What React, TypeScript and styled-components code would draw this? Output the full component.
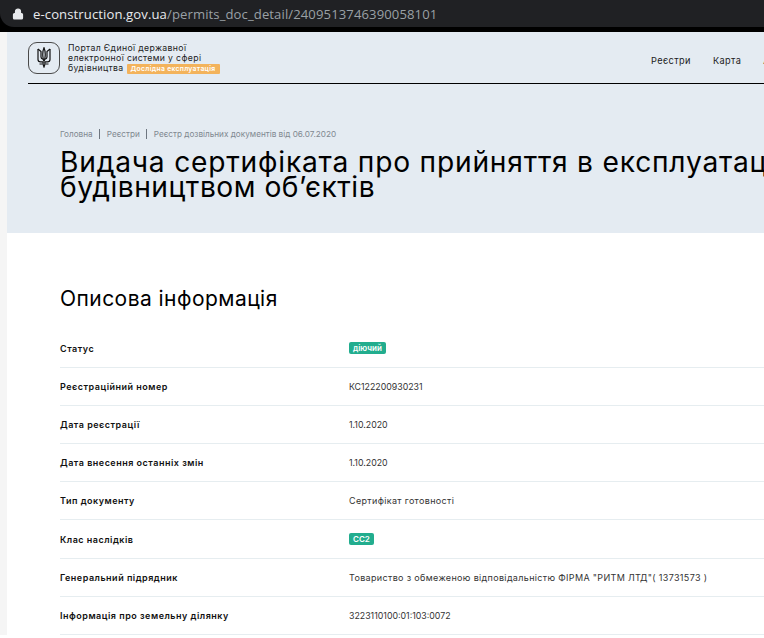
import { createGlobalStyle } from 'styled-components'
import styled from 'styled-components'
import { Lock } from 'lucide-react'

const GlobalStyle = createGlobalStyle`
  html, body {
    margin: 0;
    padding: 0;
    background: #fff;
    overflow: hidden;
  }
  body {
    font-family: 'Inter', 'Liberation Sans', sans-serif;
    color: #000;
  }
`

const Screen = styled.div`
  width: 764px;
  height: 638px;
  overflow: hidden;
`

const ChromeBar = styled.div`
  height: 32px;
  background: #000;
`

const AddressPill = styled.div`
  height: 27px;
  background: #202124;
  border-radius: 0 0 0 14px;
  display: flex;
  align-items: center;
  padding-left: 12px;
  gap: 9px;
`

const Url = styled.div`
  font-family: 'Open Sans', sans-serif;
  font-size: 13.1px;
  letter-spacing: 0.1px;
  color: #9aa0a6;
  white-space: nowrap;
  b {
    font-weight: 400;
    color: #e8eaed;
  }
`

const Page = styled.div`
  padding-left: 7px;
  background: linear-gradient(to right, #f5f5f5 7px, #fff 7px);
  width: 1100px;
`

const Hero = styled.section`
  background: #e4ebf2;
  height: 201px;
  padding: 0 21px;
  display: flex;
  flex-direction: column;
`

const Header = styled.header`
  height: 51px;
  border-bottom: 1px solid #000;
  display: flex;
  align-items: center;
  gap: 8px;
`

const LogoBox = styled.div`
  width: 30px;
  height: 30px;
  border: 1px solid #4a4a4a;
  border-radius: 9px;
  display: flex;
  align-items: center;
  justify-content: center;
  flex: none;
`

const PortalName = styled.div`
  margin-top: 2px;
  font-size: 8.7px;
  line-height: 10.2px;
  letter-spacing: 0.36px;
  color: #222;
  width: 170px;
  white-space: nowrap;
`

const TrialBadge = styled.span`
  display: inline-block;
  margin-left: 3px;
  padding: 0 4px;
  height: 10px;
  line-height: 10px;
  font-size: 6.8px;
  letter-spacing: 0.3px;
  font-weight: 600;
  color: #fff;
  background: #f3b35c;
  border-radius: 1px;
`

const Nav = styled.nav`
  margin: 6px 0 0 405px;
  display: flex;
  gap: 22px;
  font-size: 9.2px;
  letter-spacing: 0.4px;
  color: #1b1b1b;
  white-space: nowrap;
`

const Crumbs = styled.div`
  margin: 45px 0 0 32px;
  display: flex;
  align-items: center;
  gap: 5.5px;
  font-size: 8.2px;
  color: #808890;
  height: 10px;
`

const CrumbSep = styled.span`
  width: 1px;
  height: 10px;
  background: #6e7680;
  margin: 0 1px;
`

const Title = styled.h1`
  margin: 11px 0 0 32px;
  font-size: 28.2px;
  line-height: 25px;
  font-weight: 400;
  color: #000;
  letter-spacing: 0.5px;
  white-space: nowrap;
  &::first-line {
    letter-spacing: 0.78px;
  }
`

const Content = styled.main`
  padding: 54px 0 0 53px;
`

const SectionTitle = styled.h2`
  margin: 0 0 18.5px;
  font-size: 21px;
  line-height: 24px;
  font-weight: 400;
  letter-spacing: 0.45px;
  color: #000;
`

const Rows = styled.div`
  width: 900px;
`

const Row = styled.div`
  display: grid;
  grid-template-columns: 289px 1fr;
  align-items: center;
  height: 37.2px;
  border-bottom: 1px solid #e6edf0;
  font-size: 9px;
  box-sizing: content-box;
`

const Label = styled.div`
  font-weight: 600;
  letter-spacing: 0.5px;
  color: #111;
`

const Value = styled.div<{ $numeric?: boolean }>`
  font-size: ${(p) => (p.$numeric ? '8.8px' : '9px')};
  letter-spacing: ${(p) => (p.$numeric ? '0' : '0.34px')};
  color: #333;
`

const Pill = styled.span`
  display: inline-block;
  padding: 0 4px;
  height: 12px;
  line-height: 12px;
  font-size: 8px;
  font-weight: 600;
  letter-spacing: 0;
  color: #fff;
  background: #22ad8e;
  border-radius: 2px;
`

// малий тризуб для логотипа
const Trident = () => (
  <svg width="14" height="21" viewBox="0 0 14 21" fill="none" stroke="#111" strokeWidth="1.2">
    <path d="M1 2v10.500c0 1.500 1 2.300 2.500 2.300H6M13 2v10.500c0 1.500-1 2.300-2.500 2.300H8" />
    <path d="M1 2l3 2.500v5.500c0 1.300.7 1.900 2 2.200M13 2l-3 2.500v5.500c0 1.300-.7 1.900-2 2.200" />
    <path d="M7 .7C5.800 3.500 5.500 7 6 10.500c.2 1.400.5 2.800 1 4.100.5-1.300.8-2.700 1-4.100C8.500 7 8.200 3.500 7 .7z" />
    <path d="M6.100 15c-.3 1.800.1 3.200.9 5 .8-1.800 1.200-3.200.9-5" />
    <path d="M2.500 17h3.200M8.300 17h3.200" />
  </svg>
)

const rows = [
  { label: 'Статус', pill: 'діючий' },
  { label: 'Реєстраційний номер', value: 'КС122200930231', numeric: true },
  { label: 'Дата реєстрації', value: '1.10.2020', numeric: true },
  { label: 'Дата внесення останніх змін', value: '1.10.2020', numeric: true },
  { label: 'Тип документу', value: 'Сертифікат готовності' },
  { label: 'Клас наслідків', pill: 'СС2' },
  { label: 'Генеральний підрядник', value: 'Товариство з обмеженою відповідальністю ФІРМА "РИТМ ЛТД"( 13731573 )' },
  { label: 'Інформація про земельну ділянку', value: '3223110100:01:103:0072', numeric: true },
]

export default function App() {
  return (
    <Screen>
      <GlobalStyle />
      <ChromeBar>
        <AddressPill>
          <Lock size={12} fill="#e8eaed" color="#e8eaed" strokeWidth={2.4} />
          <Url>
            <b>e-construction.gov.ua</b>/permits_doc_detail/2409513746390058101
          </Url>
        </AddressPill>
      </ChromeBar>
      <Page>
        <Hero>
          <Header>
            <LogoBox>
              <Trident />
            </LogoBox>
            <PortalName>
              Портал Єдиної державної
              <br />
              електронної системи у сфері
              <br />
              будівництва<TrialBadge>Дослідна експлуатація</TrialBadge>
            </PortalName>
            <Nav>
              <span>Реєстри</span>
              <span>Карта</span>
              <span>Аналітика</span>
            </Nav>
          </Header>
          <Crumbs>
            <span>Головна</span>
            <CrumbSep />
            <span>Реєстри</span>
            <CrumbSep />
            <span>Реєстр дозвільних документів від 06.07.2020</span>
          </Crumbs>
          <Title>
            Видача сертифіката про прийняття в експлуатацію закінчених
            <br />
            будівництвом об’єктів
          </Title>
        </Hero>
        <Content>
          <SectionTitle>Описова інформація</SectionTitle>
          <Rows>
            {rows.map((r) => (
              <Row key={r.label}>
                <Label>{r.label}</Label>
                <Value $numeric={r.numeric}>{r.pill ? <Pill>{r.pill}</Pill> : r.value}</Value>
              </Row>
            ))}
          </Rows>
        </Content>
      </Page>
    </Screen>
  )
}
